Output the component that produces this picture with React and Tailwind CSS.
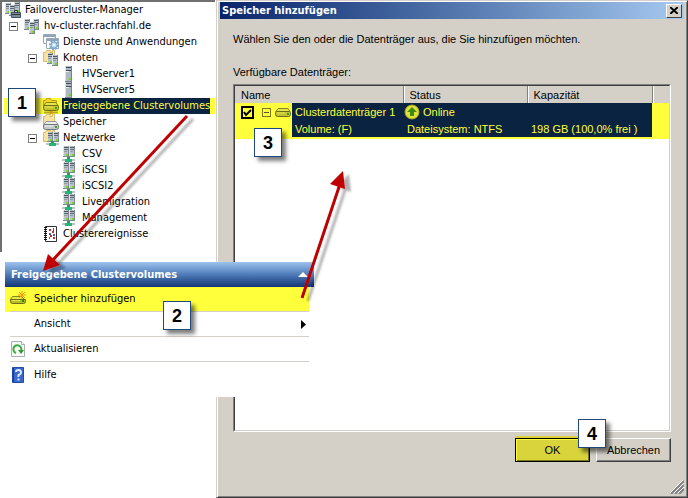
import React from 'react';

const ServerShape = ({ x, y, h = 11 }) => (
  <g transform={`translate(${x} ${y})`} shapeRendering="crispEdges">
    <rect width="6" height={h} fill="#7d8792" />
    <rect width="5" height={h - 1} fill="#b9c2ca" />
    <rect width="1" height={h - 1} fill="#dde3e8" />
    <rect x="1" y="1" width="4" height="1" fill="#4c5661" />
    <rect x="1" y="3" width="4" height="1" fill="#5d6873" />
    <rect x="1" y="5" width="3" height="1" fill="#8e99a4" />
    <rect x="3" y={h - 3} width="2" height="2" fill="#6fdc14" />
  </g>
);

const Folder = () => (
  <g>
    <path d="M.5 11.5v-9h2l1-2h4l1 2h3v9z" fill="#f8e3a0" stroke="#dcbb66" />
    <path d="M6.500 2.500h3v-2h2v4" fill="#fff3c8" stroke="#dcbb66" />
  </g>
);

const Disk = ({ y, yellow }) => (
  <g transform={`translate(0 ${y})`}>
    <path d="M3 .5h10l2 3H1z" fill={yellow ? '#e3e34a' : '#eceeed'} stroke={yellow ? '#85851c' : '#92989b'} />
    <path d="M.5 4.500q0-1 1-1h13q1 0 1 1v2q0 2-2 2h-11q-2 0-2-2z" fill={yellow ? '#c3c332' : '#c3c8ca'} stroke={yellow ? '#6e6e12' : '#737a7e'} />
    <path d="M2 5h8" stroke={yellow ? '#e8e84c' : '#f4f5f5'} />
    <path d="M12 5h2v2h-2z" fill="#3fa41c" />
  </g>
);

const NetworkCable = ({ x }) => (
  <g transform={`translate(${x} 0)`} shapeRendering="crispEdges">
    <rect y="13" width="13" height="2" fill="#b9c4c9" />
    <rect x="5" y="11" width="3" height="2" fill="#1f9c62" />
    <rect x="3" y="13" width="7" height="3" fill="#26b574" />
  </g>
);

const Icon = ({ type }) => (
  <svg width="16" height="16" viewBox="0 0 16 16" className="shrink-0" aria-hidden="true">
    {type === 'cluster' && (
      <>
        <ServerShape x={0} y={1} />
        <ServerShape x={9} y={1} />
        <ServerShape x={5} y={4} h={12} />
      </>
    )}
    {type === 'manager' && (
      <>
        <ServerShape x={0} y={1} />
        <ServerShape x={9} y={0} />
        <ServerShape x={4} y={3} />
        <path d="M6.500 10.500h9v5h-9z" fill="#7b8a99" stroke="#47525d" />
        <path d="M9.500 10.500v-2h3v2M7 12.500h8" fill="none" stroke="#2f3943" />
      </>
    )}
    {type === 'services' && (
      <>
        <path d="M.5.5h12v9H.5z" fill="#f7fafc" stroke="#9aa8b5" />
        <path d="M1 1h11v2H1z" fill="#91a4b7" />
        <path d="M3.500 4.500h12v10h-12z" fill="#fff" stroke="#9aa8b5" />
        <path d="M4 5h11v2H4z" fill="#91a4b7" />
        <circle cx="11" cy="11" r="4" fill="none" stroke="#7ba6cd" strokeWidth="2" strokeDasharray="2 1" />
        <circle cx="11" cy="11" r="3" fill="#c4def2" stroke="#7ba6cd" />
        <circle cx="11" cy="11" r="1" fill="#fff" />
      </>
    )}
    {type === 'nodes' && (
      <>
        <Folder />
        <ServerShape x={4} y={3} />
        <ServerShape x={9} y={5} />
      </>
    )}
    {type === 'server' && (
      <g shapeRendering="crispEdges">
        <rect x="3" width="7" height="16" fill="#77828d" />
        <rect x="3" width="6" height="15" fill="#aeb8c1" />
        <rect x="3" width="1" height="15" fill="#dbe1e6" />
        <rect x="4" y="1" width="5" height="1" fill="#404a54" />
        <rect x="4" y="4" width="5" height="1" fill="#404a54" />
        <rect x="4" y="5" width="3" height="1" fill="#e7ecf0" />
        <rect x="7" y="12" width="2" height="2" fill="#6fdc14" />
      </g>
    )}
    {type === 'volumes' && (
      <>
        <path d="M.5 9.500v-7h2l1-2h4l1 2h5v7z" fill="#f4d625" stroke="#c49f14" />
        <Disk y={4} yellow />
        <path d="M1 14.500h14" stroke="#b4ae20" strokeWidth="2" />
        <path d="M6 14.500h4M8 13v3" stroke="#d39a14" strokeWidth="2" />
      </>
    )}
    {type === 'storage' && (
      <>
        <Folder />
        <Disk y={7} />
      </>
    )}
    {type === 'networks' && (
      <>
        <Folder />
        <ServerShape x={4} y={2} h={10} />
        <ServerShape x={10} y={2} h={10} />
        <NetworkCable x={3} />
      </>
    )}
    {type === 'network' && (
      <>
        <ServerShape x={1} y={0} />
        <ServerShape x={7} y={0} />
        <NetworkCable x={0} />
      </>
    )}
    {type === 'events' && (
      <>
        <path d="M2.500.5h11v15h-11z" fill="#fff" stroke="#333" />
        <path d="M2.500 1v14" stroke="#111" strokeWidth="3" strokeDasharray="1 1" />
        <path d="M6 3h2v2H6zM9 5h2v2H9zM7 9h2v2H7zM10 11h2v2h-2z" fill="#c32b35" />
        <path d="M6 7h2v2H6zM10 2h1v3h-1zM10 8h2v2h-2zM6 11h1v2H6z" fill="#4a5a9c" />
      </>
    )}
    {type === 'disk' && <Disk y={4} yellow />}
    {type === 'add' && (
      <>
        <path d="M2.500 5.500h9l3 3h-14z" fill="#e8e84c" stroke="#85851c" />
        <path d="M.5 8.500h15v2q0 2-2 2h-11q-2 0-2-2z" fill="#b9b92d" stroke="#6e6e12" />
        <path d="M2 9.500h8" stroke="#e8e84c" />
        <path d="M12 9h2v2h-2z" fill="#238f0b" />
        <path d="M12 0v8M8 4h8M9 1l6 6M15 1L9 7" stroke="#f39d13" />
      </>
    )}
    {type === 'refresh' && (
      <>
        <path d="M1.500.5h10l3 3v12h-13z" fill="#f7fbf7" stroke="#a7aeb5" />
        <path d="M11.500.5v3h3" fill="#fff" stroke="#a7aeb5" />
        <path d="M6 12a4 4 0 1 1 5-2" fill="none" stroke="#3cae3c" strokeWidth="2" />
        <path d="M8 9h6l-3 4z" fill="#2e9c30" />
      </>
    )}
    {type === 'help' && (
      <>
        <path d="M2.500.5h11v15h-11z" fill="#3b68cf" stroke="#244aa3" />
        <path d="M3.500 1v14" stroke="#1b3a8b" />
        <path d="M6 5q0-2 2.500-2T11 5.500Q11 7 9.500 7.500T8.500 10M8.500 11.500v2" fill="none" stroke="#dfe9ff" strokeWidth="2" />
      </>
    )}
    {type === 'online' && (
      <>
        <circle cx="8" cy="8" r="7" fill="#dfe03a" stroke="#aaa91a" />
        <path d="M8 3l5 5h-3v4H6V8H3z" fill="#3f8a10" />
      </>
    )}
  </svg>
);

const treeItems = [
  { label: 'Failovercluster-Manager', icon: 'manager', indent: 'pl-px' },
  { label: 'hv-cluster.rachfahl.de', icon: 'cluster', indent: 'pl-[5px]', open: true },
  { label: 'Dienste und Anwendungen', icon: 'services', indent: 'pl-[39px]' },
  { label: 'Knoten', icon: 'nodes', indent: 'pl-[24px]', open: true },
  { label: 'HVServer1', icon: 'server', indent: 'pl-[58px]' },
  { label: 'HVServer5', icon: 'server', indent: 'pl-[58px]' },
  { label: 'Freigegebene Clustervolumes', icon: 'volumes', indent: 'pl-[39px]', selected: true },
  { label: 'Speicher', icon: 'storage', indent: 'pl-[39px]' },
  { label: 'Netzwerke', icon: 'networks', indent: 'pl-[24px]', open: true },
  { label: 'CSV', icon: 'network', indent: 'pl-[58px]' },
  { label: 'iSCSI', icon: 'network', indent: 'pl-[58px]' },
  { label: 'iSCSI2', icon: 'network', indent: 'pl-[58px]' },
  { label: 'Livemigration', icon: 'network', indent: 'pl-[58px]' },
  { label: 'Management', icon: 'network', indent: 'pl-[58px]' },
  { label: 'Clusterereignisse', icon: 'events', indent: 'pl-[39px]' },
];

const actions = [
  { label: 'Speicher hinzufügen', icon: 'add', highlight: true },
  { label: 'Ansicht', submenu: true },
  { label: 'Aktualisieren', icon: 'refresh' },
  { label: 'Hilfe', icon: 'help' },
];

const Toggle = ({ label, className }) => (
  <button type="button" aria-label={label} className={`flex size-[9px] shrink-0 items-center justify-center border ${className}`}>
    <span className="h-px w-[5px] bg-current" />
  </button>
);

const ClusterTree = () => (
  <nav className="w-[215px] shrink-0 self-start border-t-2 border-l-2 border-[#707070] bg-white pb-[10px] pl-[2px]">
    <ul>
      {treeItems.map((item) => (
        <li
          key={item.label}
          className={`flex h-4 items-center ${item.indent} ${item.selected ? 'bg-[#ffff3c]' : ''}`}
        >
          {item.open && <Toggle label={item.label} className="mr-[6px] border-[#808080] text-black" />}
          <Icon type={item.icon} />
          <a
            href="#"
            className={`ml-[3px] h-4 pl-px leading-4 whitespace-nowrap ${item.selected ? 'bg-[#0a2340] text-[#ffff3c]' : ''}`}
          >
            {item.label}
          </a>
        </li>
      ))}
    </ul>
  </nav>
);

const ActionPane = () => (
  <section className="absolute top-[262px] left-[5px] w-[309px] bg-white pb-[10px]">
    <header className="flex h-[25px] items-center justify-between bg-linear-to-b from-[#9dc3ee] via-[#4f7cb8] to-[#143678] px-[6px] font-bold text-white">
      <h2>Freigegebene Clustervolumes</h2>
      <svg width="10" height="5" aria-hidden="true">
        <path d="M0 5l5-5 5 5z" fill="#fff" />
      </svg>
    </header>
    <ul className="mr-[5px]">
      {actions.map((action) => (
        <li key={action.label} className={`pl-[5px] ${action.highlight ? 'bg-[#ffff3c]' : ''}`}>
          <button
            type="button"
            className={`flex h-[25px] w-full items-center text-left ${action.label === 'Hilfe' ? '' : 'border-b border-[#d4d0c8]'}`}
          >
            <span className="mr-2 size-4 shrink-0">{action.icon && <Icon type={action.icon} />}</span>
            <span className="grow">{action.label}</span>
            {action.submenu && (
              <svg width="5" height="9" className="mr-[3px]" aria-hidden="true">
                <path d="M0 0l5 4.500L0 9z" />
              </svg>
            )}
          </button>
        </li>
      ))}
    </ul>
  </section>
);

const DiskTable = () => (
  <div className="mt-[4px] flex grow border border-t-[#808080] border-r-white border-b-white border-l-[#808080]">
    <div className="grow border border-t-[#404040] border-r-[#d4d0c8] border-b-[#d4d0c8] border-l-[#404040] bg-white">
      <table className="w-full table-fixed border-collapse text-left">
        <colgroup>
          <col className="w-[57px]" />
          <col className="w-[111px]" />
          <col className="w-[124px]" />
          <col className="w-[125px]" />
          <col />
        </colgroup>
        <thead>
          <tr className="h-[17px] bg-[#d4d0c8] leading-4">
            <th colSpan="2" className="border-r border-[#808080] pl-[6px] font-normal">Name</th>
            <th className="border-r border-[#808080] pl-[6px] font-normal shadow-[inset_1px_0_0_#fff]">Status</th>
            <th className="border-r border-[#808080] pl-[6px] font-normal shadow-[inset_1px_0_0_#fff]">Kapazität</th>
            <th className="shadow-[inset_1px_0_0_#fff]" />
          </tr>
        </thead>
        <tbody className="border-b-2 border-[#ffff3c] bg-[#ffff3c] text-[#ffff3c]">
          <tr className="h-[18px]">
            <td>
              <div className="flex items-center pl-[6px]">
                <span className="relative size-[13px] shrink-0">
                  <input
                    type="checkbox"
                    defaultChecked
                    aria-label="Clusterdatenträger 1"
                    className="peer block size-[13px] appearance-none border-2 border-black"
                  />
                  <svg viewBox="0 0 13 13" className="pointer-events-none absolute inset-0 hidden peer-checked:block">
                    <path d="M3 6l2 3 5-5" fill="none" stroke="#000" strokeWidth="2" />
                  </svg>
                </span>
                <Toggle label="Clusterdatenträger 1" className="mr-1 ml-2 border-[#77771e] text-[#55551a]" />
                <Icon type="disk" />
              </div>
            </td>
            <td className="bg-[#0a2340] pl-[3px] whitespace-nowrap">Clusterdatenträger 1</td>
            <td className="bg-[#0a2340]">
              <span className="flex items-center gap-[3px] pl-px"><Icon type="online" />Online</span>
            </td>
            <td className="bg-[#0a2340]" />
            <td />
          </tr>
          <tr className="h-4">
            <td />
            <td className="bg-[#0a2340] pl-[3px]">Volume: (F)</td>
            <td className="bg-[#0a2340] pl-1 whitespace-nowrap">Dateisystem: NTFS</td>
            <td className="bg-[#0a2340] pl-1 whitespace-nowrap">198 GB (100,0% frei )</td>
            <td />
          </tr>
        </tbody>
      </table>
    </div>
  </div>
);

const AddStorageDialog = () => (
  <section className="ml-px flex min-h-screen grow flex-col border border-t-[#d4d0c8] border-r-[#404040] border-b-[#404040] border-l-[#d4d0c8] bg-[#d4d0c8] p-px font-['Liberation_Sans',Arial,sans-serif] shadow-[inset_1px_1px_0_#fff,inset_-1px_-1px_0_#808080]">
    <header className="mx-[2px] flex h-[17px] items-center justify-between bg-linear-to-r from-[#0a246a] to-[#a6caf0] px-[2px]">
      <h1 className="font-['DejaVu_Sans_Condensed','DejaVu_Sans',Tahoma,sans-serif] font-bold text-white">
        Speicher hinzufügen
      </h1>
      <button
        type="button"
        aria-label="Schließen"
        className="flex h-[14px] w-4 items-center justify-center border border-t-white border-r-[#404040] border-b-[#404040] border-l-white bg-[#d4d0c8]"
      >
        <svg width="8" height="7" aria-hidden="true">
          <path d="M0 0l8 7M8 0L0 7" stroke="#000" strokeWidth="2" />
        </svg>
      </button>
    </header>
    <div className="flex grow flex-col px-[15px]">
      <p className="mt-[12px]">Wählen Sie den oder die Datenträger aus, die Sie hinzufügen möchten.</p>
      <p className="mt-[17px]">Verfügbare Datenträger:</p>
      <DiskTable />
      <div className="mt-[6px] flex justify-end gap-[6px]">
        <button
          type="button"
          className="h-[24px] w-[75px] border border-black bg-[#d9d43c] shadow-[0_-2px_0_#d9d43c,inset_1px_1px_0_#ffff3c,inset_-1px_-1px_0_#77771e]"
        >
          OK
        </button>
        <button
          type="button"
          className="h-[24px] w-[75px] border border-t-white border-r-[#404040] border-b-[#404040] border-l-white shadow-[inset_-1px_-1px_0_#808080]"
        >
          Abbrechen
        </button>
      </div>
    </div>
    <div className="flex h-[34px] items-end justify-end p-[2px]">
      <svg width="14" height="14" aria-hidden="true">
        <path d="M1 14L14 1M5 14l9-9M9 14l5-5" stroke="#808080" strokeWidth="2" />
        <path d="M0 13L13 0M4 13l10-10M8 13l6-6" stroke="#fff" />
      </svg>
    </div>
  </section>
);

const Callout = ({ number, className }) => (
  <span
    className={`absolute flex h-[29px] w-[28px] items-center justify-center border border-[#1f497d] bg-white font-['Liberation_Sans',Arial,sans-serif] text-[18px] font-bold shadow-[4px_4px_4px_rgba(0,0,0,0.5)] ${className}`}
  >
    {number}
  </span>
);

const Arrows = () => (
  <svg width="688" height="498" className="pointer-events-none absolute top-0 left-0" aria-hidden="true">
    <defs>
      <filter id="shadow" x="-20%" y="-20%" width="140%" height="140%">
        <feDropShadow dx="6" dy="3" stdDeviation="1" floodColor="#000" floodOpacity="0.3" />
      </filter>
    </defs>
    <g filter="url(#shadow)" fill="#c00000" stroke="#c00000">
      <path d="M187 116L51 262" strokeWidth="3" />
      <path d="M43 271l5-17 12 11z" stroke="none" />
      <path d="M302 298l38-114" strokeWidth="3" />
      <path d="M343 171l2 18-15-5z" stroke="none" />
    </g>
  </svg>
);

const App = () => {
  return (
    <main className="relative flex min-h-screen bg-white font-['DejaVu_Sans_Condensed','DejaVu_Sans',Tahoma,sans-serif] text-[11px] leading-4 text-black">
      <ClusterTree />
      <AddStorageDialog />
      <ActionPane />
      <Arrows />
      <Callout number="1" className="top-[88px] left-[8px]" />
      <Callout number="2" className="top-[301px] left-[163px]" />
      <Callout number="3" className="top-[128px] left-[254px]" />
      <Callout number="4" className="top-[419px] left-[578px]" />
    </main>
  );
};

export default App;
